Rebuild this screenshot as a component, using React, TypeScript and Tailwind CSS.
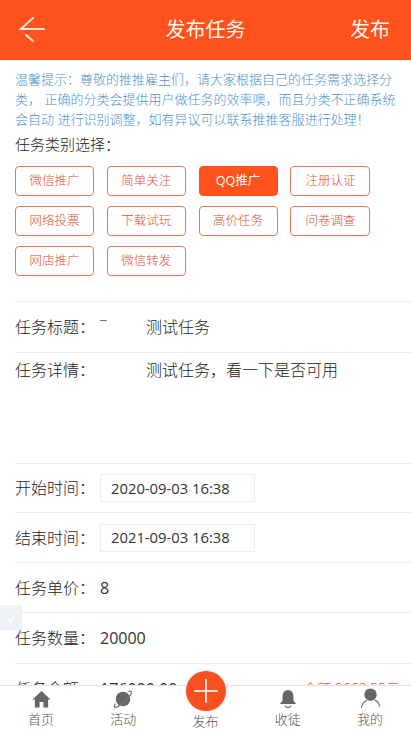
const CJK = "font-['Open_Sans','Noto_Sans_CJK_SC',sans-serif] font-light";

const tags = [
  "微信推广", "简单关注", "QQ推广", "注册认证",
  "网络投票", "下载试玩", "高价任务", "问卷调查",
  "网店推广", "微信转发",
];

function Row({ label, value, h, boxed, children }: { label: string; value?: string; h: string; boxed?: boolean; children?: React.ReactNode }) {
  return (
    <div className={`${h} ml-[15px] flex items-center border-b border-[#ececec] text-[16px] text-[#222]`}>
      <span className="w-[85px] shrink-0">{label}</span>
      {boxed ? (
        <span className="flex h-[28px] w-[155px] items-center border border-[#eeeeee] pl-[10px] text-[14.8px] font-normal text-[#333]">{value}</span>
      ) : (
        <span className="font-normal text-[#333]">{value}</span>
      )}
      {children}
    </div>
  );
}

function Home() {
  return (
    <svg viewBox="0 0 20 20" className="h-[19px] w-[19px]" fill="#666">
      <path d="M10 1 L19.5 10 H17 V18.5 H12 V12.5 H8 V18.5 H3 V10 H.5 Z" />
    </svg>
  );
}
function Planet() {
  return (
    <svg viewBox="0 0 22 22" className="h-[20px] w-[20px]" fill="none">
      <circle cx="11" cy="11" r="8" fill="#666" />
      <path d="M17 3 C20 1.5 21 2.5 20 5 C18 10 8 19 3.5 20 C1 20.6 1 18.5 2.6 16" stroke="#777" strokeWidth="1.4" />
    </svg>
  );
}
function Bell() {
  return (
    <svg viewBox="0 0 22 22" className="h-[20px] w-[20px]" fill="#666">
      <path d="M11 1 C15.5 1 17 5 17 9 V13 L20 16.5 H2 L5 13 V9 C5 5 6.5 1 11 1 Z" />
      <path d="M7.5 18.5 C9 20.8 13 20.8 14.5 18.5" stroke="#777" strokeWidth="1.4" fill="none" />
    </svg>
  );
}
function Person() {
  return (
    <svg viewBox="0 0 22 22" className="h-[21px] w-[21px]" fill="none">
      <circle cx="11" cy="7" r="6.5" fill="#666" />
      <path d="M1.5 21 C2 16.5 4.5 14 7.5 13" stroke="#777" strokeWidth="1.3" />
      <path d="M15 12.5 C18 13.5 20 16 20.5 19.5" stroke="#777" strokeWidth="1.3" />
    </svg>
  );
}

function NavItem({ icon, label }: { icon?: React.ReactNode; label: string }) {
  return (
    <div className="flex w-[82px] flex-col items-center">
      <div className="flex h-[22px] items-end">{icon}</div>
      <span className="text-[13px] leading-[20px] text-[#555]">{label}</span>
    </div>
  );
}

export default function App() {
  return (
    <div className={`relative h-[731px] w-[411px] overflow-hidden bg-white ${CJK}`}>
      <header className="flex h-[60px] items-center justify-between bg-[#ff521c] pl-[19px] pr-[21px] font-normal text-white">
        <svg viewBox="0 0 26 26" className="h-[26px] w-[26px]" fill="none" stroke="#ffe3d6" strokeWidth="2" strokeLinecap="round">
          <path d="M25 12 H2 L14 1 M7 18 L14 24" />
        </svg>
        <span className="pl-[16px] text-[20px] text-[#fff4ee]">发布任务</span>
        <span className="text-[20px] text-[#fff4ee]">发布</span>
      </header>

      <p className="mt-[9px] pl-[15px] pr-[12px] text-[13px] leading-[20px] text-[#4f94c8]">
        温馨提示：尊敬的推推雇主们，请大家根据自己的任务需求选择分类， 正确的分类会提供用户做任务的效率噢，而且分类不正确系统会自动 进行识别调整，如有异议可以联系推推客服进行处理！
      </p>

      <div className="mt-[4px] pl-[15px] text-[15px] leading-[22px] text-[#222]">任务类别选择：</div>

      <div className="mt-[11px] grid grid-cols-[79px_79px_79px_80px] gap-x-[12.8px] gap-y-[10px] pl-[15px]">
        {tags.map((t) => (
          <div
            key={t}
            className={`flex h-[30px] items-center justify-center rounded-[4px] border text-[12.5px] ${
              t === "QQ推广"
                ? "border-[#ff521c] bg-[#ff521c] font-normal text-white"
                : "border-[#e0795a] bg-white text-[#dc4f30]"
            }`}
          >
            {t}
          </div>
        ))}
      </div>

      <div className="mt-[25px] ml-[15px] border-b border-[#ececec]" />

      <Row label="任务标题：" h="h-[51px]">
        <span className="pl-[46px]">测试任务</span>
      </Row>
      <div className="ml-[15px] h-[111px] border-b border-[#ececec] text-[16px] text-[#222]">
        <div className="flex h-[33px] items-center">
          <span className="w-[85px] shrink-0">任务详情：</span>
          <span className="pl-[46px]">测试任务，看一下是否可用</span>
        </div>
      </div>
      <Row label="开始时间：" value="2020-09-03 16:38" h="h-[49px]" boxed />
      <Row label="结束时间：" value="2021-09-03 16:38" h="h-[50px]" boxed />
      <Row label="任务单价：" value="8" h="h-[50px]" />
      <Row label="任务数量：" value="20000" h="h-[51px]" />
      <div className="ml-[15px] flex h-[50px] items-center justify-between pr-[11px] text-[16px] text-[#222]">
        <div className="flex">
          <span className="w-[85px] shrink-0">任务金额：</span>
          <span className="font-normal text-[#333]">176000.00</span>
        </div>
        <span className="mb-[1px] text-[14px] text-[#e4553a]">余额:8662.55元</span>
      </div>

      <div className="absolute left-[100px] top-[320px] h-[1px] w-[7px] bg-[#777]" />

      {/* floating translucent check badge */}
      <div className="absolute left-0 top-[605px] flex h-[25px] w-[22px] items-center justify-center bg-[#eef3f7]">
        <svg viewBox="0 0 12 12" className="h-[12px] w-[12px]" fill="none" stroke="#fff" strokeWidth="1.5">
          <path d="M2 7 L5 10 L10 3" />
        </svg>
      </div>

      {/* bottom tab bar */}
      <nav className="absolute bottom-0 left-0 flex h-[46px] w-full items-start justify-between border-t border-[#e2e2e2] bg-white pt-[1px]">
        <NavItem icon={<Home />} label="首页" />
        <NavItem icon={<Planet />} label="活动" />
        <div className="flex w-[82px] flex-col items-center pt-[24px]">
          <span className="text-[13px] leading-[20px] text-[#555]">发布</span>
        </div>
        <NavItem icon={<Bell />} label="收徒" />
        <NavItem icon={<Person />} label="我的" />
      </nav>

      {/* raised publish button */}
      <div className="absolute left-[186px] top-[671px] flex h-[40px] w-[40px] items-center justify-center rounded-full bg-[#fb4f1f] shadow-[0_0_0_1px_#f6f0ee]">
        <svg viewBox="0 0 24 24" className="h-[24px] w-[24px]" stroke="#ffe0d4" strokeWidth="2" strokeLinecap="round">
          <path d="M12 1 V23 M1 12 H23" />
        </svg>
      </div>
    </div>
  );
}
